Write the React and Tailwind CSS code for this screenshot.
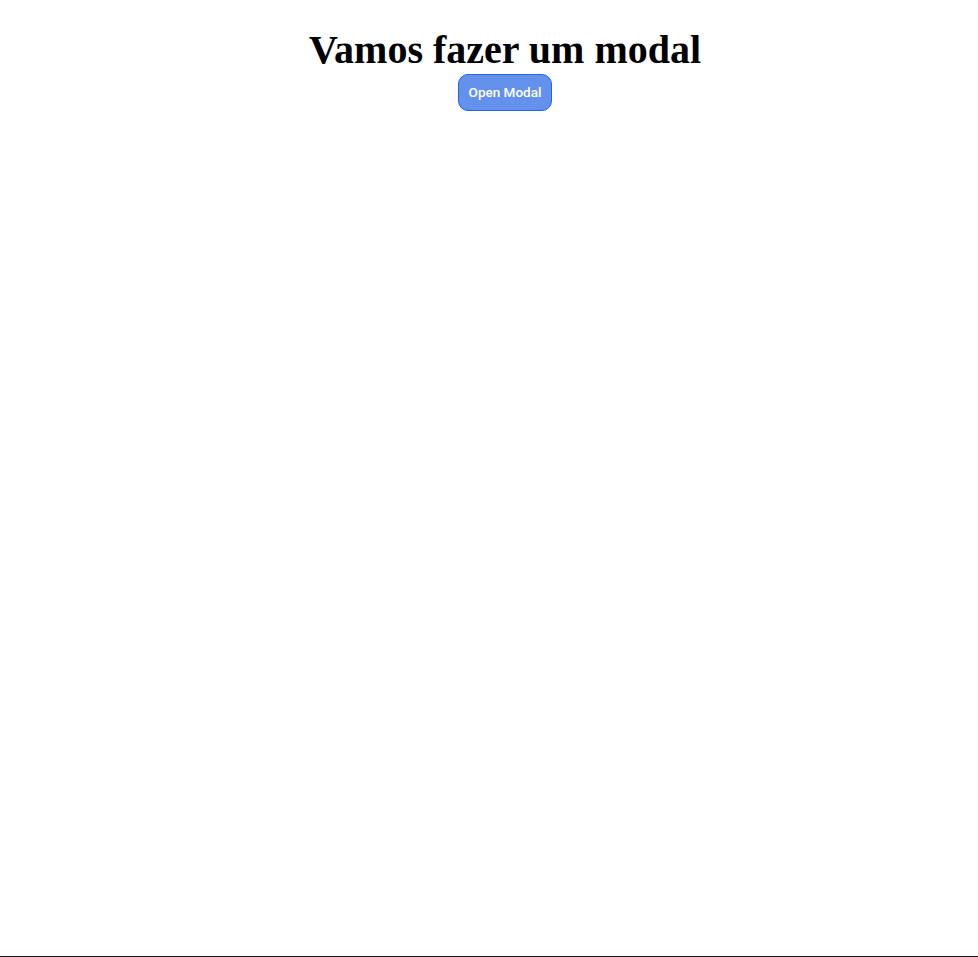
export default function App() {
  return (
    <div className="flex min-h-screen flex-col bg-white">
      <div className="flex flex-1 flex-col items-center pl-8 pt-[26px]">
        <h1 className="font-['Liberation_Serif',serif] text-[40px] font-bold leading-[48px] text-black">
          Vamos fazer um modal
        </h1>
        <button className="h-[37px] w-[94px] rounded-[10px] border border-[#2563eb] bg-[#6391ec] font-['Roboto','Liberation_Sans',sans-serif] text-[13.5px] font-medium text-white">
          Open Modal
        </button>
      </div>
      <div className="h-px bg-[#1c1414]"></div>
    </div>
  );
}
